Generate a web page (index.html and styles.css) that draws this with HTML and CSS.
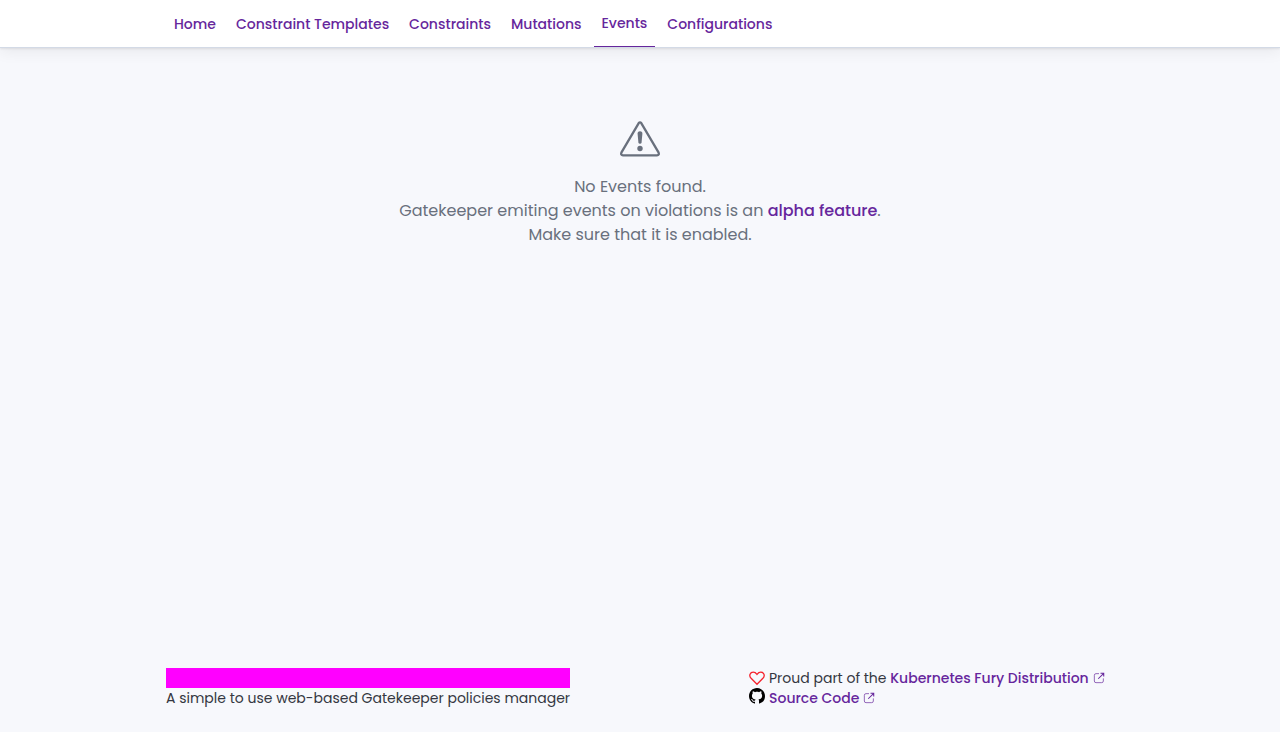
FILE: index.html
```html
<!DOCTYPE html>
<html lang="en">
<head>
<meta charset="utf-8">
<meta name="viewport" content="width=device-width, initial-scale=1">
<title>Gatekeeper Policy Manager</title>
<link rel="stylesheet" href="styles.css">
</head>
<body>
<svg class="sprite" aria-hidden="true">
  <symbol id="popout" viewBox="0 0 16 16">
    <path d="M8 2.200H4A2.200 2.200 0 0 0 1.800 4.400V12A2.200 2.200 0 0 0 4 14.200H11.600A2.200 2.200 0 0 0 13.800 12V8.500" fill="none" stroke="currentColor" stroke-width="1.300" stroke-opacity=".7"/>
    <path d="M10 1.700H14.300V6M14.300 1.700 7 9" fill="none" stroke="currentColor" stroke-width="1.400"/>
  </symbol>
</svg>
<header class="header">
  <nav class="nav" aria-label="Main">
    <a class="nav-link" href="#home">Home</a>
    <a class="nav-link" href="#constrainttemplates">Constraint Templates</a>
    <a class="nav-link" href="#constraints">Constraints</a>
    <a class="nav-link" href="#mutations">Mutations</a>
    <a class="nav-link nav-link-active" href="#events" aria-current="page">Events</a>
    <a class="nav-link" href="#configurations">Configurations</a>
  </nav>
</header>
<main class="empty">
  <svg class="empty-icon" viewBox="0 0 40 40" aria-hidden="true">
    <path d="M18.600 4.300 1.500 33.400Q.4 36.300 3 36.300H37Q39.600 36.300 38.500 33.400L21.400 4.300Q20 2.500 18.600 4.300Z" fill="none" stroke="currentColor" stroke-width="2.300" stroke-linejoin="round"/>
    <path d="M17.600 14.800Q17.400 12.300 20 12.300T22.400 14.800L21.600 23.200Q21.400 24.800 20 24.800T18.400 23.200Z" fill="currentColor"/>
    <circle cx="20" cy="29.500" r="2.700" fill="currentColor"/>
  </svg>
  <p class="empty-text">No Events found.<br>Gatekeeper emiting events on violations is an <a class="link" href="#alpha">alpha feature</a>.<br>Make sure that it is enabled.</p>
</main>
<footer class="footer">
  <div class="brand">
    <div class="brand-bar"></div>
    <p>A simple to use web-based Gatekeeper policies manager</p>
  </div>
  <div class="credits">
    <p class="credit">
      <svg class="icon heart" viewBox="0 0 16 16" aria-hidden="true"><path d="M8 14.200 2.100 8.200C-.5 5.400 1.200 2.200 4.200 2.200 6 2.200 7.100 3.200 8 4.400 8.900 3.200 10 2.200 11.800 2.200 14.800 2.200 16.500 5.400 13.900 8.200Z"/></svg>
      <span>Proud part of the <a class="link" href="#distribution">Kubernetes Fury Distribution</a></span>
      <svg class="popout" aria-hidden="true"><use href="#popout"/></svg>
    </p>
    <p class="credit">
      <svg class="icon github" viewBox="0 0 16 16" aria-hidden="true"><path d="M8 0C3.580 0 0 3.580 0 8c0 3.540 2.290 6.530 5.470 7.590.4.070.55-.17.55-.38 0-.19-.01-.82-.01-1.490-2.010.37-2.530-.49-2.690-.94-.09-.23-.48-.94-.82-1.130-.28-.15-.68-.52-.01-.53.63-.01 1.080.58 1.230.82.72 1.210 1.870.87 2.330.66.07-.52.28-.87.51-1.070-1.780-.2-3.640-.89-3.640-3.950 0-.87.31-1.590.82-2.150-.08-.2-.36-1.020.08-2.120 0 0 .67-.21 2.200.82.64-.18 1.320-.27 2-.27s1.360.09 2 .27c1.530-1.040 2.200-.82 2.200-.82.44 1.100.16 1.920.08 2.120.51.56.82 1.270.82 2.150 0 3.070-1.870 3.750-3.650 3.950.29.25.54.73.54 1.480 0 1.070-.01 1.930-.01 2.200 0 .21.15.46.55.38A8.010 8.010 0 0 0 16 8c0-4.420-3.580-8-8-8Z"/></svg>
      <a class="link" href="#source">Source Code</a>
      <svg class="popout" aria-hidden="true"><use href="#popout"/></svg>
    </p>
  </div>
</footer>
</body>
</html>
```
FILE: styles.css
```css
* { box-sizing: border-box; }
body {
  margin: 0;
  min-height: 100vh;
  display: flex;
  flex-direction: column;
  background: #f7f8fc;
  color: #343741;
  font: 14px/20px Poppins, Inter, sans-serif;
}
p { margin: 0; }
.sprite { position: absolute; width: 0; height: 0; }
.header {
  background: #fff;
  border-bottom: 1px solid #d3dae6;
  box-shadow: 0 1px 2px rgba(0, 0, 0, .08), 0 3px 15px rgba(0, 0, 0, .07);
}
.nav, .footer {
  width: 100%;
  max-width: 964px;
  margin: 0 auto;
  padding: 0 8px;
  display: flex;
}
.nav {
  column-gap: 4px;
}
.nav-link {
  padding: 1px 8px 0;
  line-height: 46px;
  font-weight: 500;
  color: #66269c;
  text-decoration: none;
}
.nav-link-active {
  padding-top: 0;
  border-bottom: 1px solid #66269c;
}
.link { color: #66269c; font-weight: 500; text-decoration: none; }
.empty {
  flex: 1;
  display: flex;
  flex-direction: column;
  align-items: center;
  gap: 16px;
  padding: 71px 16px 24px;
  color: #69707d;
  text-align: center;
}
.empty-icon { width: 40px; height: 40px; }
.empty-text { font-size: 16px; line-height: 24px; }
.footer { justify-content: space-between; padding-bottom: 24px; }
.brand-bar { height: 20px; background: #f0f; }
.credits { min-width: 365px; }
.credit { display: flex; align-items: center; gap: 4px; }
.icon { width: 16px; height: 16px; }
.heart { fill: none; stroke: #f5222d; stroke-width: 1.3; }
.github { fill: #000; margin-bottom: 4px; }
.popout { width: 12px; height: 12px; color: #66269c; }
```
